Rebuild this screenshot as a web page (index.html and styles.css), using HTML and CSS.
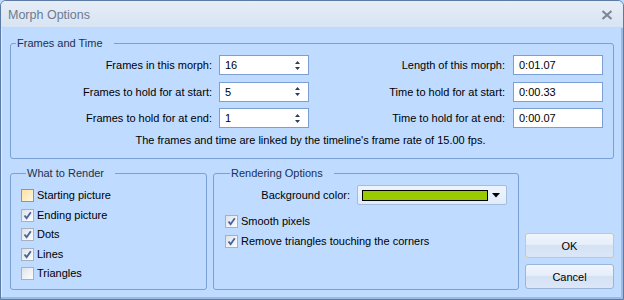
FILE: index.html
```html
<!DOCTYPE html>
<html>
<head>
<meta charset="utf-8">
<link rel="stylesheet" href="styles.css">
</head>
<body>
<div class="window">
  <div class="titlebar">
    <span class="title">Morph Options</span>
    <svg class="close" width="12" height="10" viewBox="0 0 12 10"><path d="M1.5 1 L10.5 9 M10.5 1 L1.5 9" stroke="#7d8796" stroke-width="2.2" fill="none"/></svg>
  </div>
  <div class="content">
    <fieldset class="group frames">
      <legend>Frames and Time</legend>
      <div class="grid">
        <span class="lbl">Frames in this morph:</span>
        <span class="field"><span>16</span><svg class="spin" width="5" height="9" viewBox="0 0 5 9"><path d="M2.5 0 L5 3 L0 3 Z M0 6 L5 6 L2.5 9 Z" fill="#2c3d5c"/></svg></span>
        <span class="lbl r">Length of this morph:</span>
        <span class="field">0:01.07</span>

        <span class="lbl">Frames to hold for at start:</span>
        <span class="field"><span>5</span><svg class="spin" width="5" height="9" viewBox="0 0 5 9"><path d="M2.5 0 L5 3 L0 3 Z M0 6 L5 6 L2.5 9 Z" fill="#2c3d5c"/></svg></span>
        <span class="lbl r">Time to hold for at start:</span>
        <span class="field">0:00.33</span>

        <span class="lbl">Frames to hold for at end:</span>
        <span class="field"><span>1</span><svg class="spin" width="5" height="9" viewBox="0 0 5 9"><path d="M2.5 0 L5 3 L0 3 Z M0 6 L5 6 L2.5 9 Z" fill="#2c3d5c"/></svg></span>
        <span class="lbl r">Time to hold for at end:</span>
        <span class="field">0:00.07</span>
      </div>
      <p class="note">The frames and time are linked by the timeline's frame rate of 15.00 fps.</p>
    </fieldset>
    <div class="bottom">
      <fieldset class="group render">
        <legend>What to Render</legend>
        <label class="check"><span class="cb hot"></span>Starting picture</label>
        <label class="check"><span class="cb"><svg width="11" height="11" viewBox="0 0 11 11"><path d="M2.5 5.5 L4.6 8.2 L8.8 2.3" stroke="#4866a0" stroke-width="1.9" fill="none"/></svg></span>Ending picture</label>
        <label class="check"><span class="cb"><svg width="11" height="11" viewBox="0 0 11 11"><path d="M2.5 5.5 L4.6 8.2 L8.8 2.3" stroke="#4866a0" stroke-width="1.9" fill="none"/></svg></span>Dots</label>
        <label class="check"><span class="cb"><svg width="11" height="11" viewBox="0 0 11 11"><path d="M2.5 5.5 L4.6 8.2 L8.8 2.3" stroke="#4866a0" stroke-width="1.9" fill="none"/></svg></span>Lines</label>
        <label class="check"><span class="cb"></span>Triangles</label>
      </fieldset>
      <fieldset class="group ropts">
        <legend>Rendering Options</legend>
        <div class="colorrow">
          <span>Background color:</span>
          <span class="combo"><span class="swatch"></span><svg width="8" height="5" viewBox="0 0 8 5"><path d="M0 0 L8 0 L4 4.5 Z" fill="#000"/></svg></span>
        </div>
        <div class="checks">
          <label class="check"><span class="cb"><svg width="11" height="11" viewBox="0 0 11 11"><path d="M2.5 5.5 L4.6 8.2 L8.8 2.3" stroke="#4866a0" stroke-width="1.9" fill="none"/></svg></span>Smooth pixels</label>
          <label class="check"><span class="cb"><svg width="11" height="11" viewBox="0 0 11 11"><path d="M2.5 5.5 L4.6 8.2 L8.8 2.3" stroke="#4866a0" stroke-width="1.9" fill="none"/></svg></span>Remove triangles touching the corners</label>
        </div>
      </fieldset>
      <div class="buttons">
        <button class="btn default">OK</button>
        <button class="btn">Cancel</button>
      </div>
    </div>
  </div>
</div>
</body>
</html>
```
FILE: styles.css
```css
* { box-sizing: border-box; }
html, body { margin: 0; padding: 0; }
body {
  width: 624px;
  height: 300px;
  overflow: hidden;
  font-family: "Liberation Sans", Arial, sans-serif;
  font-size: 11px;
  color: #000;
  background: #bfdbff;
}
.window {
  width: 624px;
  height: 300px;
  border: 1px solid #5b7aa4;
  border-radius: 6px 6px 0 0;
  background: #bfdbff;
  display: flex;
  flex-direction: column;
  overflow: hidden;
  box-shadow: inset -2px -2px 0 #9dbbe2, inset 1px 0 0 #dfeaf8;
}
.titlebar {
  flex: none;
  height: 27px;
  display: flex;
  align-items: center;
  justify-content: space-between;
  padding: 1px 10px 0 7px;
  background: linear-gradient(#e6edf7, #d8e4f3);
  border-bottom: 1px solid #c6d7ee;
}
.title {
  color: #6c7b90;
  font-size: 12.5px;
}
.close { display: block; }
.content {
  flex: 1;
  padding: 9px 9px 0 9px;
}
.group {
  margin: 0;
  min-width: 0;
  border: 1px solid #7aa0d4;
  border-radius: 3px;
}
.group legend {
  padding: 0 11px 0 1px;
  margin-left: 5px;
  line-height: 13px;
  color: #1b3150;
}
.frames {
  padding: 5px 10px 11px 0;
}
.grid {
  display: grid;
  grid-template-columns: 201px 90px 1fr 90px;
  grid-template-rows: 20px 20px 20px;
  column-gap: 7px;
  row-gap: 6.5px;
}
.lbl {
  text-align: right;
  line-height: 20px;
  white-space: nowrap;
}
.lbl.r { padding-right: 1px; }
.field {
  height: 20px;
  border: 1px solid #7b9fd4;
  background: #fff;
  padding: 0 8px 0 5px;
  display: flex;
  align-items: center;
  justify-content: space-between;
  line-height: 18px;
}
.spin { display: block; }
.note {
  margin: 6px 0 0 0;
  padding-left: 7px;
  line-height: 13px;
  text-align: center;
}
.bottom {
  display: flex;
  gap: 6px;
  margin-top: 8px;
  height: 123px;
}
.render {
  width: 197px;
  flex: none;
  padding: 9px 0 0 10px;
  display: flex;
  flex-direction: column;
  gap: 6.5px;
}
.check {
  display: flex;
  align-items: center;
  gap: 3px;
  height: 13px;
  line-height: 13px;
  white-space: nowrap;
}
.cb {
  width: 13px;
  height: 13px;
  flex: none;
  border: 1px solid #a7b1be;
  background: linear-gradient(135deg, #dde1e7 0%, #f0f2f5 55%, #fcfcfd 100%);
  display: flex;
  align-items: center;
  justify-content: center;
}
.cb.hot {
  border-color: #7a98c2;
  background: linear-gradient(135deg, #fde2a0 0%, #fdeec6 60%, #fef8e6 100%);
}
.cb svg { display: block; }
.ropts {
  width: 306px;
  flex: none;
  padding: 5px 11px 0 11px;
}
.colorrow {
  display: flex;
  justify-content: flex-end;
  align-items: center;
  gap: 7px;
  height: 20px;
}
.combo {
  width: 150px;
  height: 20px;
  border: 1px solid #a3bddf;
  border-radius: 2px;
  background: linear-gradient(#eef4fc, #e2ecf9);
  display: flex;
  align-items: center;
  gap: 4px;
  padding: 0 6px 0 4px;
}
.swatch {
  width: 126px;
  height: 11px;
  border: 1px solid #000;
  background: #99cc00;
}
.checks {
  margin-top: 10px;
  display: flex;
  flex-direction: column;
  gap: 7px;
}
.buttons {
  flex: 1;
  display: flex;
  flex-direction: column;
  justify-content: flex-end;
  gap: 6px;
  padding-bottom: 1px;
}
.btn {
  height: 25px;
  margin: 0;
  font: inherit;
  color: #000;
  border: 1px solid #9cb5d6;
  border-radius: 3px;
  background: linear-gradient(#f0f5fc 0%, #e6eef9 45%, #d5e2f4 50%, #dbe7f7 100%);
  padding: 0;
}
.btn.default {
  border-color: #e2c67a;
}
```
